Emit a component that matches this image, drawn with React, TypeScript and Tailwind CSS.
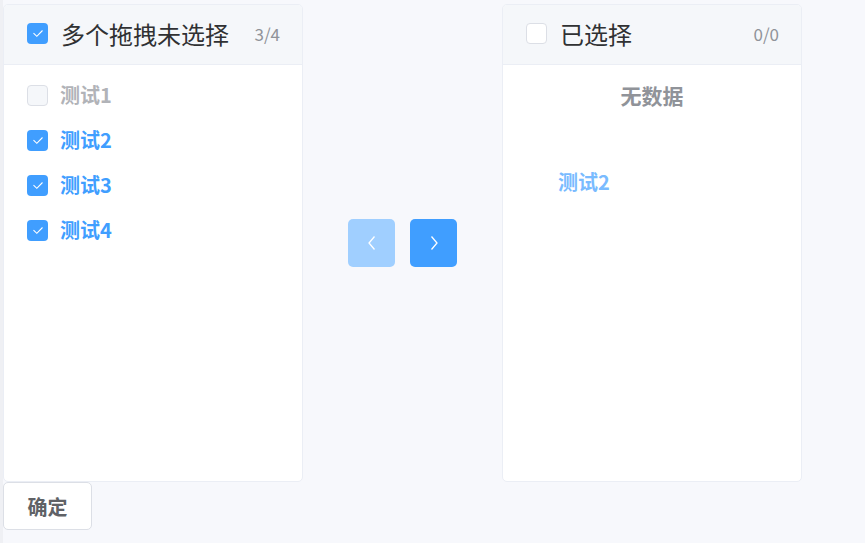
import React from "react";

const font = { fontFamily: '"Noto Sans CJK SC", "Noto Sans", sans-serif' };

function Check({ state }: { state: "on" | "off" | "dim" }) {
  if (state === "on") {
    return (
      <span className="flex h-[21px] w-[21px] items-center justify-center rounded-[4px] bg-[#409eff]">
        <svg width="12" height="9" viewBox="0 0 12 9" fill="none">
          <path d="M1.5 4.2 L4.8 7.3 L10.5 1.5" stroke="white" strokeWidth="1.1" />
        </svg>
      </span>
    );
  }
  return (
    <span
      className={
        "block h-[21px] w-[21px] rounded-[4px] border border-[#dcdfe6] " +
        (state === "dim" ? "bg-[#f5f7fa]" : "bg-white")
      }
    />
  );
}

const items = [
  { label: "测试1", on: false },
  { label: "测试2", on: true },
  { label: "测试3", on: true },
  { label: "测试4", on: true },
];

export default function App() {
  return (
    <div className="flex h-[543px] w-[865px] bg-[#f7f8fc]" style={font}>
      <div className="w-[3px] bg-[#eff0f4]" />
      <div className="flex flex-col pt-[4px]">
        <div className="flex items-center">
          {/* left panel */}
          <div className="flex h-[478px] w-[300px] flex-col overflow-hidden rounded-[5px] border border-[#ebeef5] bg-white">
            <div className="flex h-[60px] items-center border-b border-[#ebeef5] bg-[#f5f7fa] pb-[2px] pl-[23px] pr-[22px]">
              <Check state="on" />
              <span className="ml-[13px] text-[24px] text-[#303133]">多个拖拽未选择</span>
              <span className="ml-auto text-[17px] text-[#909399]">3/4</span>
            </div>
            <div className="pt-[8px]">
              {items.map((it) => (
                <div key={it.label} className="flex h-[45px] items-center pl-[23px]">
                  <Check state={it.on ? "on" : "dim"} />
                  <span
                    className={
                      "ml-[12px] -mt-[1px] text-[20px] font-bold " +
                      (it.on ? "text-[#409eff]" : "text-[#b1b3b8]")
                    }
                  >
                    {it.label}
                  </span>
                </div>
              ))}
            </div>
          </div>

          {/* buttons */}
          <div className="mx-[45px] flex gap-[15px]">
            <button className="flex h-[48px] w-[47px] items-center justify-center rounded-[5px] bg-[#a0cfff]">
              <svg width="10" height="16" viewBox="0 0 10 16" fill="none">
                <path d="M7.5 1.5 L2 8 L7.5 14.5" stroke="white" strokeWidth="1.3" />
              </svg>
            </button>
            <button className="flex h-[48px] w-[47px] items-center justify-center rounded-[5px] bg-[#409eff]">
              <svg width="10" height="16" viewBox="0 0 10 16" fill="none">
                <path d="M2.5 1.5 L8 8 L2.5 14.5" stroke="white" strokeWidth="1.3" />
              </svg>
            </button>
          </div>

          {/* right panel */}
          <div className="flex h-[478px] w-[300px] flex-col overflow-hidden rounded-[5px] border border-[#ebeef5] bg-white">
            <div className="flex h-[60px] items-center border-b border-[#ebeef5] bg-[#f5f7fa] pb-[2px] pl-[23px] pr-[22px]">
              <Check state="off" />
              <span className="ml-[13px] text-[24px] text-[#303133]">已选择</span>
              <span className="ml-auto text-[17px] text-[#909399]">0/0</span>
            </div>
            <div className="flex flex-col">
              <div className="flex h-[62px] items-center justify-center text-[21px] font-bold text-[#909399]">
                无数据
              </div>
              <div className="mt-[32px] flex h-[45px] items-center pl-[55px] text-[20px] font-bold text-[#79bbff]">
                测试2
              </div>
            </div>
          </div>
        </div>
        <button className="flex h-[48px] w-[89px] items-center justify-center rounded-[5px] border border-[#dcdfe6] bg-white pt-[2px] text-[20px] font-bold text-[#606266]">
          确定
        </button>
      </div>
    </div>
  );
}
